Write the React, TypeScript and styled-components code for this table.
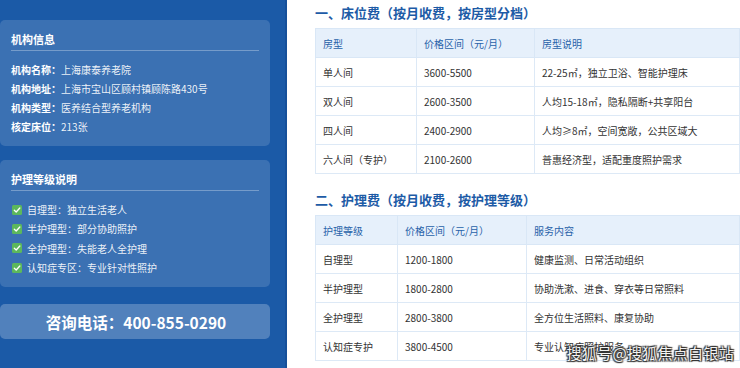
import React from "react";
import styled, {createGlobalStyle} from "styled-components";

const GlobalStyle = createGlobalStyle`
  html, body {
    margin: 0;
    padding: 0;
    background: #ffffff;
  }
  body {
    font-family: "Noto Sans CJK SC", "Noto Sans", sans-serif;
  }
`

const Page = styled.div`
  position: relative;
  display: flex;
  width: 740px;
  height: 368px;
  overflow: hidden;
`

const Side = styled.aside`
  width: 287px;
  flex: none;
  background: #1b5aa7;
  border-right: 2px solid #16509a;
  padding: 20px 15px 0 0;
  box-sizing: border-box;
  display: flex;
  flex-direction: column;
`

const Card = styled.section<{ $gap: number }>`
  background: rgba(255, 255, 255, 0.14);
  border-radius: 5px;
  padding: 11px 11px 10px;
  margin-bottom: ${p => p.$gap}px;
  color: #fff;
`

const CardTitle = styled.h3`
  margin: 0;
  font-size: 11px;
  font-weight: 700;
  line-height: 16px;
  padding-bottom: 3px;
  border-bottom: 1px solid rgba(255, 255, 255, 0.3);
`

const InfoList = styled.ul`
  list-style: none;
  margin: 9px 0 0;
  padding: 0;
`

const InfoRow = styled.li<{ $h: number }>`
  display: flex;
  align-items: center;
  font-size: 10px;
  line-height: ${p => p.$h}px;
  color: rgba(255, 255, 255, 0.92);
`

const Label = styled.b`
  font-weight: 700;
  color: #fff;
`

const Check = styled.svg`
  width: 10px;
  height: 10px;
  margin: 0 5px 0 1px;
  flex: none;
`

const PhoneCard = styled.div`
  background: rgba(255, 255, 255, 0.24);
  border-radius: 5px;
  height: 35px;
  display: flex;
  align-items: center;
  justify-content: center;
  color: #fff;
  font-size: 15.5px;
  font-weight: 700;
  padding-left: 2px;
`

const Main = styled.main`
  flex: 1;
  padding: 3px 0 0 28px;
`

const Heading = styled.h2<{ $top: number }>`
  margin: ${p => p.$top}px 0 5px;
  font-size: 13px;
  line-height: 20px;
  font-weight: 700;
  color: #1d5ba6;
`

const Table = styled.table`
  width: 424px;
  border-collapse: collapse;
  table-layout: fixed;
  font-size: 10px;
  border: 1px solid #d9e7f6;
`

const Th = styled.th`
  background: #e6f0fb;
  color: #2862a9;
  font-weight: 400;
  text-align: left;
  height: 28px;
  padding: 0 7px;
  border: 1px solid #d9e7f6;
`

const Td = styled.td`
  color: #333;
  height: 28px;
  padding: 0 7px;
  border: 1px solid #dde9f6;
  white-space: nowrap;
`

const Watermark = styled.div`
  position: absolute;
  right: 6px;
  bottom: 5px;
  font-size: 15px;
  color: #f4f4f4;
  letter-spacing: 0.3px;
  text-shadow: 0 0 1px #222, 1px 1px 1px #333, -1px -1px 1px #333, 1px -1px 1px #333, -1px 1px 1px #333;
`

const CheckBox = () => (
  <Check viewBox="0 0 10 10">
    <rect width="10" height="10" rx="1.5" fill="#5cb85c"/>
    <path d="M2.3 5.2 L4.2 7 L7.8 3" stroke="#fff" strokeWidth="1.3" fill="none" strokeLinecap="round" strokeLinejoin="round"/>
  </Check>
)

const info = [
  ["机构名称：", "上海康泰养老院"],
  ["机构地址：", "上海市宝山区顾村镇顾陈路430号"],
  ["机构类型：", "医养结合型养老机构"],
  ["核定床位：", "213张"],
]

const levels = [
  "自理型：独立生活老人",
  "半护理型：部分协助照护",
  "全护理型：失能老人全护理",
  "认知症专区：专业针对性照护",
]

const rooms = [
  ["单人间", "3600-5500", "22-25㎡，独立卫浴、智能护理床"],
  ["双人间", "2600-3500", "人均15-18㎡，隐私隔断+共享阳台"],
  ["四人间", "2400-2900", "人均≥8㎡，空间宽敞，公共区域大"],
  ["六人间（专护）", "2100-2600", "普惠经济型，适配重度照护需求"],
]

const care = [
  ["自理型", "1200-1800", "健康监测、日常活动组织"],
  ["半护理型", "1800-2800", "协助洗漱、进食、穿衣等日常照料"],
  ["全护理型", "2800-3800", "全方位生活照料、康复协助"],
  ["认知症专护", "3800-4500", "专业认知症照护服务"],
]

const PriceTable = ({head, widths, rows}: { head: string[], widths: number[], rows: string[][] }) => (
  <Table>
    <colgroup>
      {widths.map((w, i) => <col key={i} style={{width: w}}/>)}
    </colgroup>
    <thead>
    <tr>{head.map(h => <Th key={h}>{h}</Th>)}</tr>
    </thead>
    <tbody>
    {rows.map(r => (
      <tr key={r[0]}>{r.map((c, i) => <Td key={i}>{c}</Td>)}</tr>
    ))}
    </tbody>
  </Table>
)

export default function App() {
  return (
    <Page>
      <GlobalStyle/>
      <Side>
        <Card $gap={14}>
          <CardTitle>机构信息</CardTitle>
          <InfoList>
            {info.map(([k, v]) => (
              <InfoRow key={k} $h={19}><Label>{k}</Label>{v}</InfoRow>
            ))}
          </InfoList>
        </Card>
        <Card $gap={17}>
          <CardTitle>护理等级说明</CardTitle>
          <InfoList>
            {levels.map(l => (
              <InfoRow key={l} $h={19.3}><CheckBox/>{l}</InfoRow>
            ))}
          </InfoList>
        </Card>
        <PhoneCard>咨询电话：400-855-0290</PhoneCard>
      </Side>
      <Main>
        <Heading $top={0}>一、床位费（按月收费，按房型分档）</Heading>
        <PriceTable head={["房型", "价格区间（元/月）", "房型说明"]} widths={[101, 118, 205]} rows={rooms}/>
        <Heading $top={16}>二、护理费（按月收费，按护理等级）</Heading>
        <PriceTable head={["护理等级", "价格区间（元/月）", "服务内容"]} widths={[82, 129, 213]} rows={care}/>
      </Main>
      <Watermark>搜狐号@搜狐焦点白银站</Watermark>
    </Page>
  )
}
